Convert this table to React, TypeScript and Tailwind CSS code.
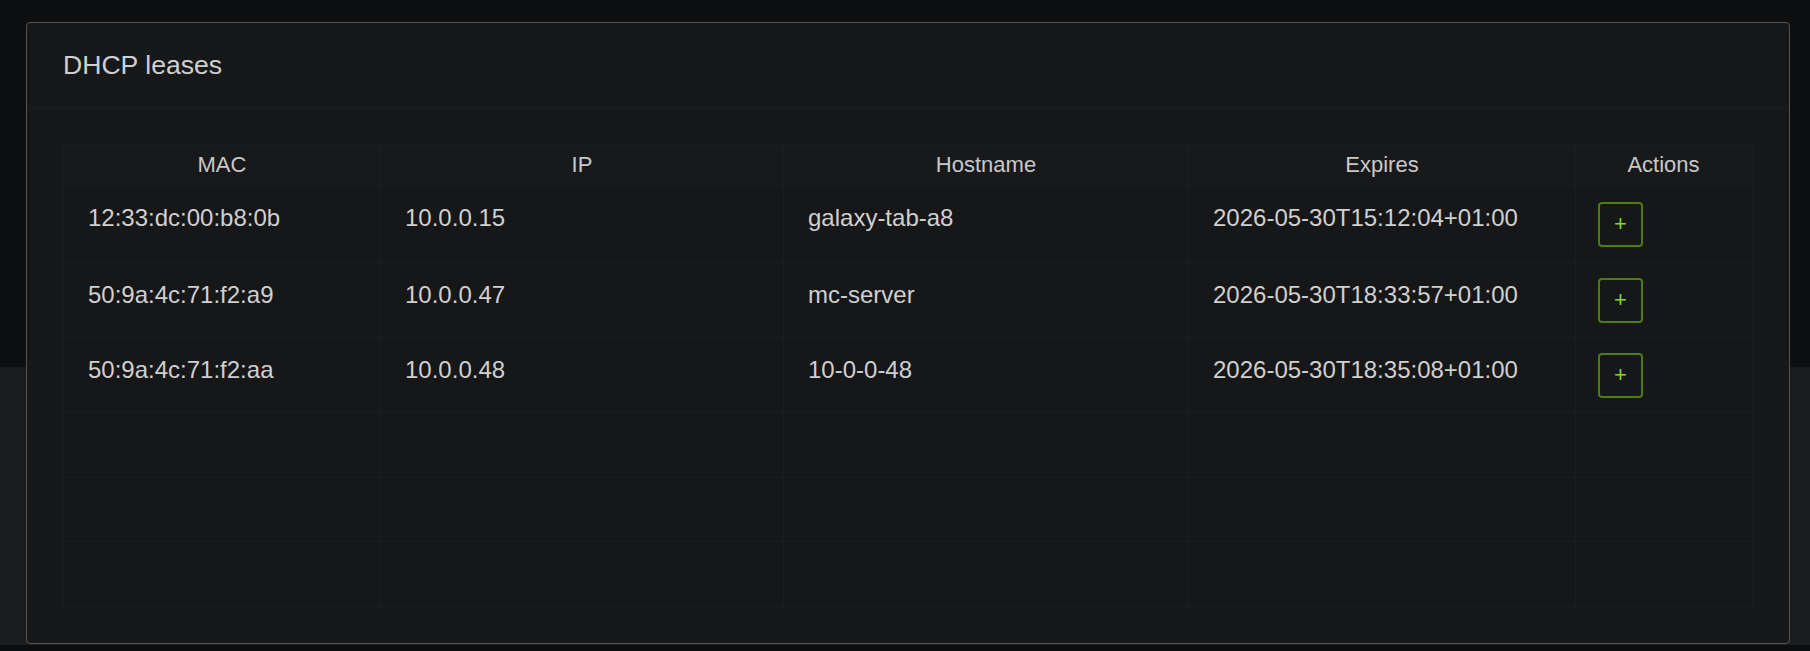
import React from 'react'

const leases = [
  { mac: '12:33:dc:00:b8:0b', ip: '10.0.0.15', hostname: 'galaxy-tab-a8', expires: '2026-05-30T15:12:04+01:00', h: 'h-[77px]' },
  { mac: '50:9a:4c:71:f2:a9', ip: '10.0.0.47', hostname: 'mc-server', expires: '2026-05-30T18:33:57+01:00', h: 'h-[75px]' },
  { mac: '50:9a:4c:71:f2:aa', ip: '10.0.0.48', hostname: '10-0-0-48', expires: '2026-05-30T18:35:08+01:00', h: 'h-[75px]' },
]

const cols = 'grid grid-cols-[317px_403px_405px_387px_175px]'
const cell = 'border-r border-[#1c1d1f]'

function HeaderCell({ children, last }: { children: React.ReactNode; last?: boolean }) {
  return (
    <div className={`flex items-center justify-center leading-[28px] ${last ? '' : cell}`}>
      {children}
    </div>
  )
}

function Cell({ children }: { children: React.ReactNode }) {
  return <div className={`pl-[24px] pt-[18px] leading-[28px] ${cell}`}>{children}</div>
}

export default function App() {
  return (
    <div
      className="relative h-[651px] w-full overflow-hidden bg-[#0e0f10]"
      style={{ fontFamily: '"Liberation Sans", Arial, sans-serif' }}
    >
      {/* page underneath the dialog */}
      <div className="h-[367px] bg-[#0e0f10]" />
      <div className="h-[278px] bg-[#1b1c1e]" />
      <div className="h-[6px] bg-[#0c0d0e]" />

      {/* dialog */}
      <div className="absolute left-[26px] top-[22px] flex h-[622px] w-[1764px] flex-col rounded-[4px] border border-[#57554b] bg-[#17181a]">
        <div className="flex h-[85px] items-center border-b border-[#1e1f21] pl-[36px] pt-[2px]">
          <h2 className="text-[26.6px] font-normal text-[#d0d0d0]">DHCP leases</h2>
        </div>
        <div className="px-[36px] pt-[36px]">
          <div className="border border-[#1c1d1f] bg-[#161719] text-[#d0d0d0]">
            <div className={`${cols} h-[41px] border-b border-[#1c1d1f] bg-[#18191b] text-[22px] text-[#c8c8c8]`}>
              <HeaderCell>MAC</HeaderCell>
              <HeaderCell>IP</HeaderCell>
              <HeaderCell>Hostname</HeaderCell>
              <HeaderCell>Expires</HeaderCell>
              <HeaderCell last>Actions</HeaderCell>
            </div>
            {leases.map((l) => (
              <div key={l.mac} className={`${cols} ${l.h} border-b border-[#1c1d1f] text-[24px]`}>
                <Cell>{l.mac}</Cell>
                <Cell>{l.ip}</Cell>
                <Cell>{l.hostname}</Cell>
                <Cell>{l.expires}</Cell>
                <div className="flex items-center pl-[22px]">
                  <button className="flex h-[45px] w-[45px] items-center justify-center rounded-[4px] border-2 border-[#4d7c0f] text-[22px] leading-none text-[#84d628]">
                    +
                  </button>
                </div>
              </div>
            ))}
            {['h-[65px] border-b', 'h-[64px] border-b', 'h-[64px]'].map((c, i) => (
              <div key={i} className={`${cols} ${c} border-[#1c1d1f]`}>
                <div className={cell} />
                <div className={cell} />
                <div className={cell} />
                <div className={cell} />
                <div />
              </div>
            ))}
          </div>
        </div>
      </div>
    </div>
  )
}
